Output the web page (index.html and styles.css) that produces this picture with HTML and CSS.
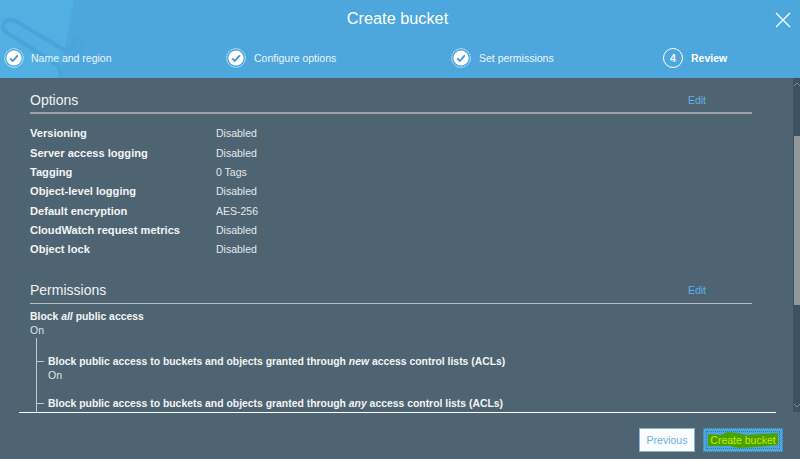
FILE: index.html
```html
<!DOCTYPE html>
<html lang="en">
<head>
<meta charset="utf-8">
<title>Create bucket</title>
<link rel="stylesheet" href="styles.css">
</head>
<body>
<div class="app">
  <header class="head">
    <svg class="decor" width="90" height="78" viewBox="0 0 90 78" aria-hidden="true">
      <path class="decor-fill" d="M0 0H74L59 78H0Z"/>
      <path class="decor-line" d="M60 78C61 72 60 67 56 64L6 32C1 28 3 20 10 20 14 20 18 22 22 25L66 51C70 52 72 49 73 45 74 39 80 36 82 41 84 46 80 52 74 55"/>
    </svg>
    <div class="title-row">
      <h1 class="title">Create bucket</h1>
      <svg class="close" width="16" height="16" viewBox="0 0 16 16" aria-hidden="true"><path d="M1 1 15 15M15 1 1 15"/></svg>
    </div>
    <ol class="steps">
      <li class="step">
        <svg class="check" width="20" height="20" viewBox="0 0 20 20" aria-hidden="true"><circle class="ring" cx="10" cy="10" r="9.3"/><circle class="disc" cx="10" cy="10" r="7.6"/><path class="tick" d="M6.2 10.4 8.8 13 13.8 7.4"/></svg>
        <span>Name and region</span>
      </li>
      <li class="step">
        <svg class="check" width="20" height="20" viewBox="0 0 20 20" aria-hidden="true"><circle class="ring" cx="10" cy="10" r="9.3"/><circle class="disc" cx="10" cy="10" r="7.6"/><path class="tick" d="M6.2 10.4 8.8 13 13.8 7.4"/></svg>
        <span>Configure options</span>
      </li>
      <li class="step">
        <svg class="check" width="20" height="20" viewBox="0 0 20 20" aria-hidden="true"><circle class="ring" cx="10" cy="10" r="9.3"/><circle class="disc" cx="10" cy="10" r="7.6"/><path class="tick" d="M6.2 10.4 8.8 13 13.8 7.4"/></svg>
        <span>Set permissions</span>
      </li>
      <li class="step current">
        <span class="num">4</span>
        <span>Review</span>
      </li>
    </ol>
  </header>

  <div class="middle">
    <main class="content">
      <section class="options">
        <div class="sec-head"><h2>Options</h2><a class="edit">Edit</a></div>
        <dl class="rows">
          <div class="row"><dt>Versioning</dt><dd>Disabled</dd></div>
          <div class="row"><dt>Server access logging</dt><dd>Disabled</dd></div>
          <div class="row"><dt>Tagging</dt><dd>0 Tags</dd></div>
          <div class="row"><dt>Object-level logging</dt><dd>Disabled</dd></div>
          <div class="row"><dt>Default encryption</dt><dd>AES-256</dd></div>
          <div class="row"><dt>CloudWatch request metrics</dt><dd>Disabled</dd></div>
          <div class="row"><dt>Object lock</dt><dd>Disabled</dd></div>
        </dl>
      </section>
      <section class="perms">
        <div class="sec-head thin"><h2>Permissions</h2><a class="edit">Edit</a></div>
        <div class="block">
          <strong>Block <em>all</em> public access</strong>
          <p>On</p>
        </div>
        <div class="tree">
          <div class="leaf">
            <strong>Block public access to buckets and objects granted through <em>new</em> access control lists (ACLs)</strong>
            <p>On</p>
          </div>
          <div class="leaf">
            <strong>Block public access to buckets and objects granted through <em>any</em> access control lists (ACLs)</strong>
          </div>
        </div>
      </section>
    </main>
    <div class="scrollbar">
      <svg class="arrow up" width="6" height="4" viewBox="0 0 6 4" aria-hidden="true"><path d="M0 4 3 1 6 4"/></svg>
      <div class="thumb"></div>
      <svg class="arrow down" width="6" height="4" viewBox="0 0 6 4" aria-hidden="true"><path d="M0 0 3 3 6 0"/></svg>
    </div>
  </div>

  <footer class="foot">
    <button class="btn prev" type="button">Previous</button>
    <button class="btn create" type="button"><span>Create bucket</span></button>
  </footer>
</div>
</body>
</html>
```
FILE: styles.css
```css
* { box-sizing: border-box; }
html, body { margin: 0; padding: 0; }
body { font-family: "Liberation Sans", Arial, sans-serif; background: #4f6472; }
.app { width: 800px; height: 459px; display: flex; flex-direction: column; overflow: hidden; background: #4f6472; color: #fff; }

.head { position: relative; flex: 0 0 78px; height: 78px; background: #4da7dc; overflow: hidden; }
.decor { position: absolute; left: 0; top: 0; }
.decor-fill { fill: #51afe1; }
.decor-line { fill: none; stroke: #48a4da; stroke-width: 4; stroke-linecap: round; stroke-linejoin: round; }
.title-row { position: relative; height: 42px; display: flex; justify-content: center; align-items: flex-start; padding: 9px 5px 0 0; }
.title { margin: 0; font-size: 16.3px; line-height: 19px; font-weight: 400; color: #fff; }
.close { position: absolute; right: 9px; top: 12px; }
.close path { stroke: #fff; stroke-width: 1.3; fill: none; }

.steps { position: relative; list-style: none; margin: 0; padding: 6px 0 0 4px; display: grid; grid-template-columns: 222px 225px 212px auto; }
.step { display: flex; align-items: center; gap: 7px; height: 20px; font-size: 10.5px; color: #eaf5fb; white-space: nowrap; }
.step + .step { gap: 8px; }
.ring { fill: none; stroke: #dceff9; stroke-width: 1; stroke-dasharray: 1.4 0.6; }
.disc { fill: #fff; }
.tick { fill: none; stroke: #3f95cd; stroke-width: 1.8; }
.current { font-weight: 700; color: #fff; }
.num { width: 20px; height: 20px; border: 1.5px solid #fff; border-radius: 50%; display: flex; align-items: center; justify-content: center; font-size: 10.5px; }

.middle { flex: 0 0 334px; height: 334px; display: flex; overflow: hidden; }
.content { flex: 1; min-width: 0; padding: 0 41px 0 30px; overflow: hidden; }

.sec-head { display: flex; justify-content: space-between; align-items: center; height: 36px; padding: 9px 46px 0 0; border-bottom: 2px solid #9ba3aa; }
.sec-head.thin { border-bottom: 1px solid #b6bcc1; height: 35px; padding-top: 8px; }
.sec-head h2 { margin: 0; font-size: 14px; line-height: 16px; font-weight: 400; color: #eef1f3; }
.edit { font-size: 10.5px; color: #5db2e4; }

.rows { margin: 9.75px 0 0; }
.row { display: flex; height: 19.33px; align-items: center; font-size: 11.1px; }
.row dt { width: 186px; font-weight: 700; color: #f2f4f5; }
.row dd { margin: 0; font-size: 10.5px; color: #e4e8ea; }

.perms { margin-top: 10.25px; }
.block { padding-top: 6px; font-size: 10.4px; line-height: 14px; }
.block strong, .leaf strong { font-weight: 700; color: #f2f4f5; display: block; }
.block p, .leaf p { margin: -1px 0 0; font-size: 10.5px; line-height: 14px; color: #dfe4e7; }

.tree { margin: 1px 0 0 6px; padding: 2px 0 0 11px; border-left: 1px solid #c3c8cc; }
.leaf { position: relative; padding-top: 15px; height: 42px; font-size: 10.4px; line-height: 14px; }
.leaf + .leaf { height: 44px; }
.leaf::before { content: ""; position: absolute; left: -11px; top: 21px; width: 7px; height: 1px; background: #c3c8cc; }

.scrollbar { position: relative; flex: 0 0 7px; width: 7px; background: #3d5260; padding: 58px 0 0 1px; }
.thumb { height: 169px; background: #8f979d; }
.arrow { position: absolute; right: 0; }
.arrow path { fill: none; stroke: #7d8e99; stroke-width: 1; }
.up { top: 4px; }
.down { bottom: 4px; }

.foot { flex: 1; margin: 0 24px 0 19px; border-top: 1px solid #fff; display: flex; justify-content: flex-end; align-items: flex-start; gap: 8px; padding-top: 15px; }
.btn { font-family: inherit; font-size: 10.5px; height: 24px; padding: 0; cursor: pointer; }
.prev { width: 56px; background: #fbfdfe; border: 1px solid #7db9e0; color: #6cb0e0; }
.create { width: 80px; margin-right: -7px; background: #4da7dc; border: 1px dotted #3b7ca6; display: flex; align-items: center; justify-content: center; outline: 1px dotted #37789f; outline-offset: -4px; }
.create span { display: block; width: 70px; height: 16px; line-height: 16px; background: #4aa000; color: #c4ea00; white-space: nowrap; clip-path: polygon(0 2px, 18% 3px, 28% 0, 42% 1px, 55% 3px, 75% 2px, 100% 1px, 100% 13px, 85% 14px, 66% 15px, 45% 16px, 30% 14px, 0 14px); }
```
